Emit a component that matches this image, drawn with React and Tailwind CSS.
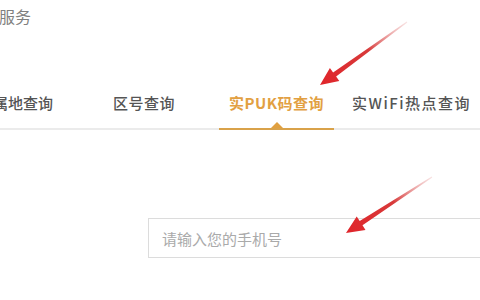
import { useState } from 'react'

const tabs = [
  { label: '属地查询', cls: 'ml-[-7px]' },
  { label: '区号查询', cls: 'ml-[60px] tracking-[0.5px]' },
  { label: '实PUK码查询', cls: 'ml-[44px] px-[10px] tracking-[0.5px]' },
  { label: '实WiFi热点查询', cls: 'ml-[18px] tracking-[1.5px]' },
]

// red annotation arrow, tapering from a thin tail to a wide head
function Arrow({ id, points, x1, y1, x2, y2 }) {
  return (
    <svg className="absolute inset-0 pointer-events-none" width="480" height="300" viewBox="0 0 480 300">
      <defs>
        <linearGradient id={id} gradientUnits="userSpaceOnUse" x1={x1} y1={y1} x2={x2} y2={y2}>
          <stop offset="0" stopColor="#e8a0a0" stopOpacity="0.3" />
          <stop offset="0.45" stopColor="#d83a3a" />
          <stop offset="1" stopColor="#e0242a" />
        </linearGradient>
      </defs>
      <polygon points={points} fill={`url(#${id})`} />
    </svg>
  )
}

export default function App() {
  const [active, setActive] = useState(2)
  const [phone, setPhone] = useState('')

  return (
    <div className="relative w-[480px] h-[300px] overflow-hidden bg-white font-['Noto_Sans_CJK_SC','Noto_Sans',sans-serif]">
      {/* ─── Title ─── */}
      <div className="pt-[5px] ml-[-1px] text-[16px] leading-[22px] text-[#808080]">服务</div>

      {/* ─── Tabs ─── */}
      <div className="mt-[66px] flex items-end border-b-2 border-[#ebebeb]">
        {tabs.map((t, i) => {
          const on = i === active
          return (
            <button
              key={t.label}
              onClick={() => setActive(i)}
              className={`relative shrink-0 ${t.cls} ${on ? 'text-[#e2a042] font-bold' : 'text-[#555] font-medium'} pb-[15px] text-[15px] leading-[20px] whitespace-nowrap`}
            >
              {t.label}
              {on && (
                <>
                  <span className="absolute left-0 right-0 bottom-[-2px] h-[2px] bg-[#d9a24a]" />
                  <span className="absolute left-1/2 -translate-x-1/2 bottom-0 w-0 h-0 border-x-[6px] border-x-transparent border-b-[6px] border-b-[#e0a040]" />
                </>
              )}
            </button>
          )
        })}
      </div>

      {/* ─── Phone input ─── */}
      <div className="mt-[88px] ml-[148px] w-[400px] h-[40px] border border-[#dcdcdc] flex items-center">
        <input
          value={phone}
          onChange={(e) => setPhone(e.target.value)}
          placeholder="请输入您的手机号"
          className="w-full h-full pl-[13px] text-[15px] text-[#333] outline-none placeholder:text-[#aaa] bg-transparent"
        />
      </div>

      {/* ─── Annotation arrows ─── */}
      <Arrow
        id="a1"
        x1={407} y1={22} x2={320} y2={85}
        points="406.7,21.6 333.1,72.4 329.9,67.9 320,85 339.3,80.9 336.1,76.4 407.3,22.4"
      />
      <Arrow
        id="a2"
        x1={432} y1={177} x2={346} y2={233}
        points="431.7,176.6 359.7,221.1 356.7,216.5 346,233 365.5,229.9 362.5,225.3 432.3,177.4"
      />
    </div>
  )
}
